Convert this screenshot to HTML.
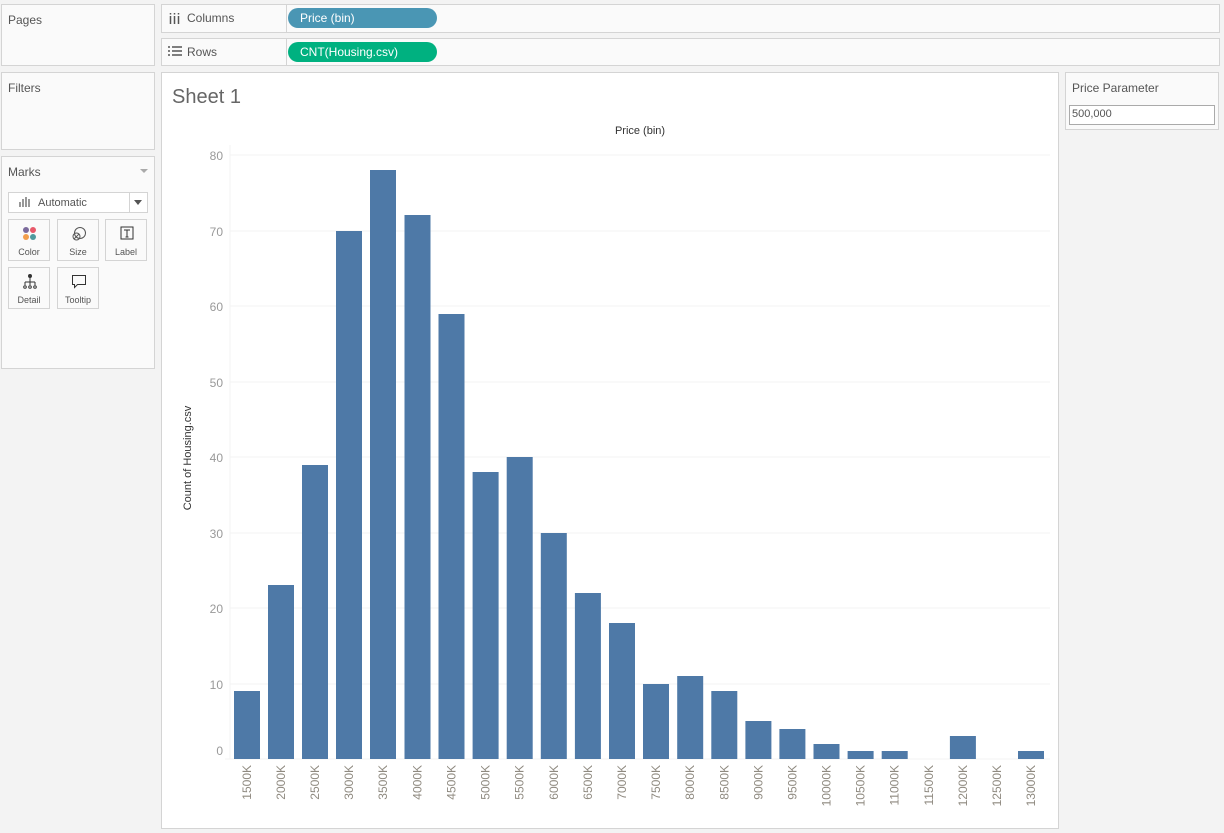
<!DOCTYPE html>
<html><head><meta charset="utf-8"><style>
body{margin:0;width:1224px;height:833px;background:#f3f3f3;font-family:"Liberation Sans",sans-serif;position:relative;overflow:hidden;color:#555}
.p{position:absolute;background:#fafafa;border:1px solid #d4d4d4;box-sizing:border-box}
.t{position:absolute;font-size:12px;color:#555}
.pill{position:absolute;height:20px;border-radius:10px;color:#fff;font-size:12px;line-height:20px;padding-left:12px;box-sizing:border-box}
.btn{position:absolute;width:42px;height:42px;border:1px solid #d4d4d4;background:#fafafa;box-sizing:border-box;font-size:9px;text-align:center;color:#555}
.btn span{position:absolute;bottom:3px;left:0;right:0}
</style></head><body>
<div class="p" style="left:1px;top:4px;width:154px;height:62px"></div><div class="t" style="left:8px;top:13px">Pages</div>
<div class="p" style="left:1px;top:72px;width:154px;height:78px"></div><div class="t" style="left:8px;top:81px">Filters</div>
<div class="p" style="left:1px;top:156px;width:154px;height:213px"></div><div class="t" style="left:8px;top:165px">Marks</div>
<div style="position:absolute;left:140px;top:169px;border:4px solid transparent;border-top:4px solid #aaa"></div>
<div class="p" style="left:8px;top:192px;width:140px;height:21px;background:#fff"></div>
<div style="position:absolute;left:129px;top:192px;width:1px;height:21px;background:#d4d4d4"></div>
<div style="position:absolute;left:134px;top:200px;border:4px solid transparent;border-top:5px solid #555"></div>
<svg style="position:absolute;left:19px;top:196px" width="12" height="12"><path d="M1 6v5M4 3v8M7 1v10M10 3v8" stroke="#555" stroke-width="1.2"/></svg>
<div class="t" style="left:38px;top:197px;font-size:11px">Automatic</div>
<div class="btn" style="left:8px;top:219px"><svg width="16" height="16" style="position:absolute;left:13px;top:6px"><circle cx="4" cy="4" r="3" fill="#7b6a9c"/><circle cx="11" cy="4" r="3" fill="#e8596a"/><circle cx="4" cy="11" r="3" fill="#f29e4c"/><circle cx="11" cy="11" r="3" fill="#4f9a9e"/></svg><span>Color</span></div>
<div class="btn" style="left:57px;top:219px"><svg width="16" height="16" style="position:absolute;left:13px;top:6px" fill="none" stroke="#555"><circle cx="9" cy="7" r="5.5"/><circle cx="5.5" cy="10.5" r="3.5"/><path d="M3 13l5-5"/></svg><span>Size</span></div>
<div class="btn" style="left:105px;top:219px"><svg width="14" height="14" style="position:absolute;left:14px;top:6px" fill="none" stroke="#333"><rect x="1" y="1" width="12" height="12"/><path d="M4 4h6M7 4v7M5.5 11h3"/></svg><span>Label</span></div>
<div class="btn" style="left:8px;top:267px"><svg width="16" height="16" style="position:absolute;left:13px;top:6px" fill="none" stroke="#333"><circle cx="8" cy="2" r="1.5" fill="#333"/><path d="M8 3v5M3 8h10M3 8v3M8 8v3M13 8v3"/><circle cx="3" cy="13" r="1.3"/><circle cx="8" cy="13" r="1.3"/><circle cx="13" cy="13" r="1.3"/></svg><span>Detail</span></div>
<div class="btn" style="left:57px;top:267px"><svg width="16" height="16" style="position:absolute;left:13px;top:6px" fill="none" stroke="#333"><path d="M1.5 1.5h13v9h-8l-3 3v-3h-2z"/></svg><span>Tooltip</span></div>

<div class="p" style="left:161px;top:4px;width:1059px;height:29px"></div>
<div style="position:absolute;left:286px;top:4px;width:1px;height:29px;background:#d4d4d4"></div>
<svg style="position:absolute;left:169px;top:12px" width="12" height="12"><path d="M1.5 4v8M5.5 4v8M9.5 4v8" stroke="#555" stroke-width="1.5"/><path d="M1.5 1v1.5M5.5 1v1.5M9.5 1v1.5" stroke="#555" stroke-width="1.5"/></svg>
<div class="t" style="left:187px;top:11px">Columns</div>
<div class="pill" style="left:288px;top:8px;width:149px;background:#4a96b4">Price (bin)</div>
<div class="p" style="left:161px;top:38px;width:1059px;height:28px"></div>
<div style="position:absolute;left:286px;top:38px;width:1px;height:28px;background:#d4d4d4"></div>
<svg style="position:absolute;left:168px;top:45px" width="14" height="12"><path d="M0 2h2M4 2h10M0 6h2M4 6h10M0 10h2M4 10h10" stroke="#555" stroke-width="1.5"/></svg>
<div class="t" style="left:187px;top:45px">Rows</div>
<div class="pill" style="left:288px;top:42px;width:149px;background:#00b180">CNT(Housing.csv)</div>

<div class="p" style="left:161px;top:72px;width:898px;height:757px;background:#fff"></div>
<div style="position:absolute;left:172px;top:86px;font-size:20px;color:#666">Sheet 1</div>

<div class="p" style="left:1065px;top:72px;width:154px;height:58px"></div>
<div class="t" style="left:1072px;top:81px">Price Parameter</div>
<div class="p" style="left:1069px;top:105px;width:146px;height:20px;background:#fff;border-color:#aaa"></div>
<div class="t" style="left:1072px;top:108px;font-size:11px">500,000</div>

<svg style="position:absolute;left:0;top:0" width="1224" height="833" font-family="Liberation Sans, sans-serif">
<text x="640" y="134" font-size="11" text-anchor="middle" fill="#333">Price (bin)</text>
<text transform="translate(191,458) rotate(-90)" font-size="11" text-anchor="middle" fill="#333">Count of Housing.csv</text>
<g stroke="#f3f3f3"><path d="M230 155H1050M230 231H1050M230 306H1050M230 382H1050M230 457H1050M230 533H1050M230 608H1050M230 684H1050M225 759H1050M230 145V759"/></g>
<g font-size="12" fill="#999" text-anchor="end">
<text x="223" y="160">80</text><text x="223" y="236">70</text><text x="223" y="311">60</text><text x="223" y="387">50</text><text x="223" y="462">40</text><text x="223" y="538">30</text><text x="223" y="613">20</text><text x="223" y="689">10</text><text x="223" y="755">0</text></g>
<g fill="#4e79a7">
<rect x="234" y="691" width="26" height="68"/>
<rect x="268" y="585" width="26" height="174"/>
<rect x="302" y="465" width="26" height="294"/>
<rect x="336" y="231" width="26" height="528"/>
<rect x="370" y="170" width="26" height="589"/>
<rect x="404.5" y="215" width="26" height="544"/>
<rect x="438.5" y="314" width="26" height="445"/>
<rect x="472.6" y="472" width="26" height="287"/>
<rect x="506.7" y="457" width="26" height="302"/>
<rect x="540.8" y="533" width="26" height="226"/>
<rect x="574.9" y="593" width="26" height="166"/>
<rect x="609" y="623" width="26" height="136"/>
<rect x="643" y="684" width="26" height="75"/>
<rect x="677.2" y="676" width="26" height="83"/>
<rect x="711.3" y="691" width="26" height="68"/>
<rect x="745.4" y="721" width="26" height="38"/>
<rect x="779.4" y="729" width="26" height="30"/>
<rect x="813.5" y="744" width="26" height="15"/>
<rect x="847.6" y="751" width="26" height="8"/>
<rect x="881.7" y="751" width="26" height="8"/>
<rect x="949.9" y="736" width="26" height="23"/>
<rect x="1018" y="751" width="26" height="8"/>
</g>
<g font-size="12" fill="#8f8a80" text-anchor="end">
<text transform="translate(251,765) rotate(-90)">1500K</text>
<text transform="translate(285,765) rotate(-90)">2000K</text>
<text transform="translate(319,765) rotate(-90)">2500K</text>
<text transform="translate(353,765) rotate(-90)">3000K</text>
<text transform="translate(387,765) rotate(-90)">3500K</text>
<text transform="translate(421.5,765) rotate(-90)">4000K</text>
<text transform="translate(455.5,765) rotate(-90)">4500K</text>
<text transform="translate(489.6,765) rotate(-90)">5000K</text>
<text transform="translate(523.7,765) rotate(-90)">5500K</text>
<text transform="translate(557.8,765) rotate(-90)">6000K</text>
<text transform="translate(591.9,765) rotate(-90)">6500K</text>
<text transform="translate(626,765) rotate(-90)">7000K</text>
<text transform="translate(660,765) rotate(-90)">7500K</text>
<text transform="translate(694.2,765) rotate(-90)">8000K</text>
<text transform="translate(728.3,765) rotate(-90)">8500K</text>
<text transform="translate(762.4,765) rotate(-90)">9000K</text>
<text transform="translate(796.4,765) rotate(-90)">9500K</text>
<text transform="translate(830.5,765) rotate(-90)">10000K</text>
<text transform="translate(864.6,765) rotate(-90)">10500K</text>
<text transform="translate(898.7,765) rotate(-90)">11000K</text>
<text transform="translate(932.8,765) rotate(-90)">11500K</text>
<text transform="translate(966.9,765) rotate(-90)">12000K</text>
<text transform="translate(1001,765) rotate(-90)">12500K</text>
<text transform="translate(1035,765) rotate(-90)">13000K</text>
</g>
</svg>
</body></html>
